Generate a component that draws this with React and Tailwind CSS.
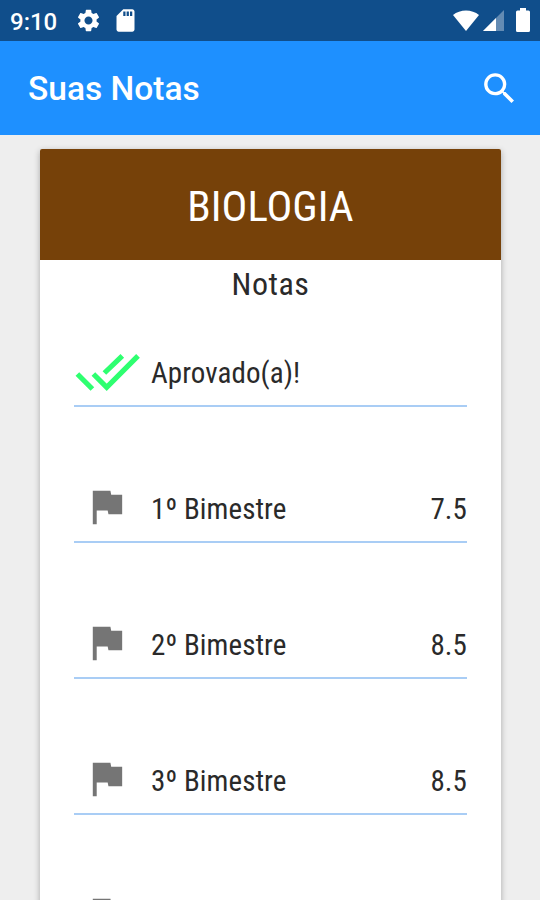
import { MdFlag, MdSdCard, MdSearch, MdSettings } from 'react-icons/md';

const grades = [
  { id: 1, label: '1º Bimestre', value: '7.5' },
  { id: 2, label: '2º Bimestre', value: '8.5' },
  { id: 3, label: '3º Bimestre', value: '8.5' },
  { id: 4 },
];

function StatusBar() {
  return (
    <div className="flex h-[41px] flex-shrink-0 items-center bg-[#104e8b] pl-[10px] pr-[10px] text-white">
      <span className="w-[65px] pt-[3px] text-[24px] font-medium leading-none">9:10</span>
      <MdSettings className="size-[27px]" />
      <MdSdCard className="ml-[10px] size-[27px]" />
      <svg viewBox="0 0 26 21" className="ml-auto h-[21px] w-[26px] fill-white">
        <path d="M0 5C7-1 19-1 26 5L13 21Z" />
      </svg>
      <svg viewBox="0 0 21 21" className="ml-[4px] h-[21px] w-[21px] fill-white">
        <path d="M0 21L21 0V21Z" opacity=".35" />
        <path d="M0 21L13 8V21Z" />
      </svg>
      <svg viewBox="0 0 14 24" className="mb-[2px] ml-[12px] h-[24px] w-[14px] fill-white">
        <path d="M4 0H10V2.5H12.5Q14 2.5 14 4V22.5Q14 24 12.5 24H1.5Q0 24 0 22.5V4Q0 2.5 1.5 2.5H4Z" />
      </svg>
    </div>
  );
}

function DoubleCheck() {
  return (
    <svg viewBox="0 0 66 66" strokeWidth="5.2" className="size-[66px] flex-shrink-0 fill-none stroke-[#2eff70]">
      <path d="M3.4 35L18.4 50M19.4 35L32.7 48.4L64 16.8M30.4 34L48.3 16.8" />
    </svg>
  );
}

function Row({ icon, label, value }) {
  return (
    <div className="flex h-[136px] items-end border-b-2 border-[#a9cdf5]">
      <div className="flex h-[66px] w-[66px] items-center justify-center">{icon}</div>
      <span className="ml-[11px] flex h-[66px] flex-1 items-center pt-[4px]">{label}</span>
      <span className="flex h-[66px] items-center pt-[4px]">{value}</span>
    </div>
  );
}

export default function App() {
  return (
    <div className="flex h-[900px] w-[540px] flex-col overflow-hidden bg-[#eeeeee] font-['Roboto',sans-serif]">
      <StatusBar />
      <header className="flex h-[94px] flex-shrink-0 items-center justify-between bg-[#1e90ff] pl-[28px] pr-[20px] text-white">
        <h1 className="pt-[2px] text-[33.5px] font-medium leading-none">Suas Notas</h1>
        <MdSearch className="size-[41px]" />
      </header>
      <main className="ml-[40px] mr-[39px] mt-[14px] h-[900px] flex-shrink-0 rounded-t-[2px] bg-white font-['Roboto_Condensed','Roboto',sans-serif] shadow-[0_2px_6px_rgba(0,0,0,0.3)] [font-stretch:75%]">
        <div className="flex h-[111px] items-center justify-center rounded-t-[2px] bg-[#764109] pt-[4px] text-[43px] text-white">
          BIOLOGIA
        </div>
        <h2 className="h-[11px] pt-[2px] text-center text-[32px] leading-[44px] tracking-[0.5px] text-[#2a2a2a]">Notas</h2>
        <div className="px-[34px] text-[29px] tracking-[0.08px] text-[#2a2a2a]">
          <Row icon={<DoubleCheck />} label="Aprovado(a)!" />
          {grades.map((g) => (
            <Row key={g.id} icon={<MdFlag className="mb-[3px] mr-[2px] size-[47px] text-[#757575]" />} label={g.label} value={g.value} />
          ))}
        </div>
      </main>
    </div>
  );
}
